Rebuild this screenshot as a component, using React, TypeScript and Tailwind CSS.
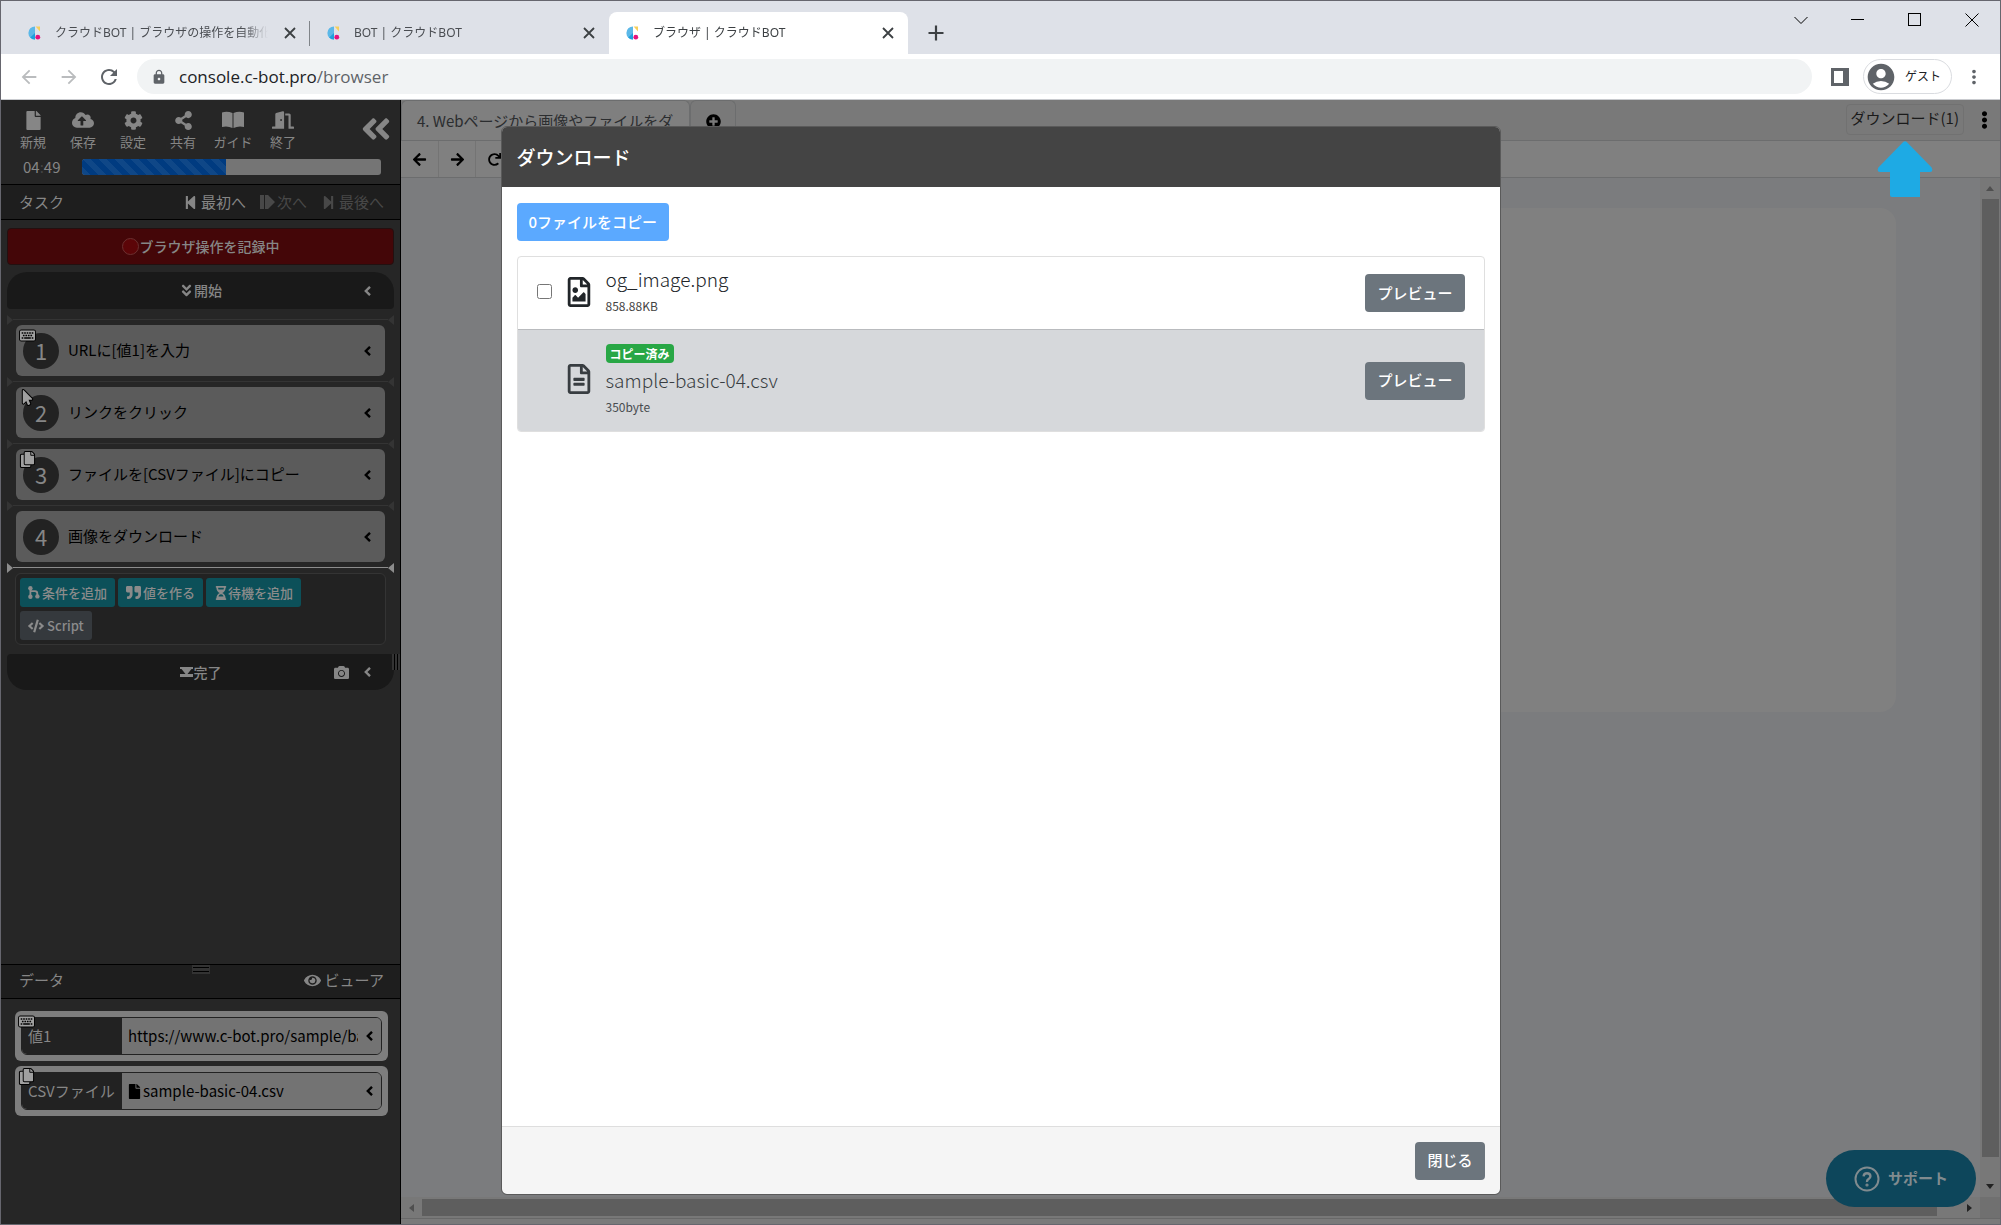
import { useState } from 'react';
import type { ReactNode } from 'react';
import {
  FaAngleDoubleDown,
  FaAngleDoubleLeft,
  FaArrowLeft,
  FaArrowRight,
  FaCamera,
  FaCloudUploadAlt,
  FaCode,
  FaCog,
  FaCopy,
  FaDoorOpen,
  FaEllipsisV,
  FaEye,
  FaFile,
  FaHourglassHalf,
  FaKeyboard,
  FaMousePointer,
  FaPlusCircle,
  FaQuoteRight,
  FaRedo,
  FaRegFileAlt,
  FaRegFileImage,
  FaShareAlt,
  FaStepBackward,
  FaStepForward,
} from 'react-icons/fa';
import { MdAccountCircle, MdArrowBack, MdArrowForward, MdLock, MdMoreVert, MdRefresh } from 'react-icons/md';

const menuItems = [
  { label: '新規', icon: <FaFile /> },
  { label: '保存', icon: <FaCloudUploadAlt className="text-[22px]" /> },
  { label: '設定', icon: <FaCog /> },
  { label: '共有', icon: <FaShareAlt /> },
  { label: 'ガイド', icon: <BookIcon /> },
  { label: '終了', icon: <FaDoorOpen className="text-[22px]" /> },
];

const tasks = [
  { text: 'URLに[値1]を入力', badge: <FaKeyboard /> },
  { text: 'リンクをクリック', badge: <FaMousePointer /> },
  { text: 'ファイルを[CSVファイル]にコピー', badge: <FaCopy /> },
  { text: '画像をダウンロード', badge: null },
];

function BookIcon() {
  return (
    <svg viewBox="0 0 22 18" className="h-[18px] w-[22px]" fill="currentColor">
      <path d="M0 1.4Q5.5 0 10.5 2V17Q5.5 14.6 0 16ZM22 1.4Q16.500 0 11.500 2V17Q16.500 14.600 22 16Z" />
    </svg>
  );
}

function Chevron() {
  return (
    <svg viewBox="0 0 7 10" className="h-2.5 w-[7px] shrink-0" fill="none" stroke="currentColor" strokeWidth="2.4">
      <path d="M6 0.800L1.800 5L6 9.200" />
    </svg>
  );
}

function BranchIcon() {
  return (
    <svg viewBox="0 0 12 13" className="mr-0.5 h-[13px] w-3" fill="currentColor">
      <circle cx="2.400" cy="2.200" r="2.200" />
      <circle cx="2.400" cy="10.800" r="2.200" />
      <circle cx="9.400" cy="10.400" r="2.200" />
      <path d="M1.500 2H3.300V11H1.500ZM3 4.200H7Q10.200 4.200 10.200 7.400V10H8.400V7.600Q8.400 6 6.800 6H3Z" />
    </svg>
  );
}

function Favicon() {
  return (
    <svg viewBox="0 0 14 14" className="size-3.5 shrink-0">
      <path d="M8 0.4A6.6 6.6 0 1 0 8 13.6Z" fill="#5bb8e8" />
      <path d="M8 7L3.2 11.6A6.6 6.6 0 0 0 8 13.6Z" fill="#1e9fdc" />
      <path d="M8.6 0.4H13V5.4Z" fill="#f7cf5a" />
      <circle cx="10.8" cy="11.2" r="2.4" fill="#e4127d" />
    </svg>
  );
}

function CloseIcon() {
  return (
    <svg viewBox="0 0 16 16" className="size-4" stroke="currentColor" strokeWidth="1.8">
      <path d="M3 3L13 13M13 3L3 13" />
    </svg>
  );
}

function BrowserTab({ title, active }: { title: string; active?: boolean }) {
  return (
    <div
      className={`relative flex h-[42px] w-[299px] items-center gap-3.5 pr-3 pl-4 text-[12px] ${
        active ? 'rounded-t-lg bg-white text-[#3c4043]' : 'text-[#4a4d52]'
      }`}
    >
      <Favicon />
      <span className="min-w-0 flex-1 overflow-hidden [mask-image:linear-gradient(to_right,black_88%,transparent)] whitespace-nowrap">
        {title}
      </span>
      <button type="button" aria-label="閉じる" className="text-[#3c4043]">
        <CloseIcon />
      </button>
    </div>
  );
}

function BrowserChrome() {
  return (
    <header className="shrink-0 font-['Noto_Sans','Noto_Sans_CJK_JP',sans-serif]">
      <div className="flex h-[53px] justify-between bg-[#dee1e8]">
        <div className="flex items-end pl-2.5">
          <BrowserTab title="クラウドBOT | ブラウザの操作を自動化" />
          <span className="mb-2 -ml-px h-[25px] w-px bg-[#808489]" />
          <BrowserTab title="BOT | クラウドBOT" />
          <BrowserTab title="ブラウザ | クラウドBOT" active />
          <button type="button" aria-label="新しいタブ" className="flex h-[42px] w-14 items-center justify-center text-[#3c4043]">
            <svg viewBox="0 0 16 16" className="size-4" stroke="currentColor" strokeWidth="2.2">
              <path d="M8 0.5V15.5M0.5 8H15.5" />
            </svg>
          </button>
        </div>
        <div className="flex h-[37px] text-black">
          <button type="button" aria-label="タブを検索" className="flex w-[57px] items-center justify-center">
            <svg viewBox="0 0 14 14" className="size-3.5" fill="none" stroke="currentColor">
              <path d="M0.5 4L7 10.5L13.5 4" />
            </svg>
          </button>
          <button type="button" aria-label="最小化" className="flex w-[57px] items-center justify-center">
            <span className="h-px w-[13px] bg-black" />
          </button>
          <button type="button" aria-label="最大化" className="flex w-[57px] items-center justify-center">
            <span className="size-[13px] border border-black" />
          </button>
          <button type="button" aria-label="閉じる" className="flex w-[57px] items-center justify-center">
            <svg viewBox="0 0 14 14" className="size-3.5" stroke="currentColor">
              <path d="M0.5 0.5L13.5 13.5M13.5 0.5L0.5 13.5" />
            </svg>
          </button>
        </div>
      </div>
      <div className="flex h-[46px] items-center border-b border-[#c9cbcf] bg-white pr-3 pl-2 text-[#5f6368]">
        <button type="button" aria-label="戻る" className="flex w-10 justify-center text-[#babcbe]">
          <MdArrowBack size={22} />
        </button>
        <button type="button" aria-label="進む" className="flex w-10 justify-center text-[#babcbe]">
          <MdArrowForward size={22} />
        </button>
        <button type="button" aria-label="再読み込み" className="flex w-10 justify-center">
          <MdRefresh size={24} />
        </button>
        <div className="ml-2 flex h-[35px] flex-1 items-center gap-3 rounded-full bg-[#f1f3f4] px-3.5">
          <MdLock size={16} />
          <span className="font-['Open_Sans',sans-serif] text-[17px]">
            <span className="text-[#202124]">console.c-bot.pro</span>/browser
          </span>
        </div>
        <button type="button" aria-label="サイドパネル" className="ml-[19px] h-[18px] w-[18px] border-[3px] border-r-[6px] border-[#5f6368]" />
        <button type="button" className="ml-3.5 flex h-[35px] items-center gap-2 rounded-full border border-[#dadce0] pr-2.5 pl-px text-[12px] text-[#202124]">
          <MdAccountCircle size={32} className="text-[#5f6368]" />
          ゲスト
        </button>
        <button type="button" aria-label="メニュー" className="ml-2 flex w-7 justify-center">
          <MdMoreVert size={22} />
        </button>
      </div>
    </header>
  );
}

function DropLine({ active }: { active?: boolean }) {
  return (
    <div className={`flex h-[11px] items-center px-1.5 ${active ? 'text-[#8c8c8c]' : 'text-[#343434]'}`}>
      <svg viewBox="0 0 6 10" className="h-2.5 w-1.5" fill="currentColor">
        <path d="M0 0L6 5L0 10Z" />
      </svg>
      <span className="h-px flex-1 bg-current" />
      <svg viewBox="0 0 6 10" className="h-2.5 w-1.5" fill="currentColor">
        <path d="M6 0L0 5L6 10Z" />
      </svg>
    </div>
  );
}

function CornerBadge({ children }: { children: ReactNode }) {
  return (
    <span className="absolute top-[3px] left-1 text-[15px] text-[#a0a0a0] [&_path]:[paint-order:stroke] [&_path]:stroke-black [&_path]:stroke-[70px] [&_svg]:overflow-visible">
      {children}
    </span>
  );
}

function ActionButton({ icon, label, dark }: { icon: ReactNode; label: string; dark?: boolean }) {
  return (
    <button
      type="button"
      className={`flex h-[29px] items-center rounded-[3px] px-2 text-[13px] font-medium text-[#8b8b8b] ${
        dark ? 'bg-[#35393d]' : 'bg-[#0c5059]'
      }`}
    >
      {icon}
      {label}
    </button>
  );
}

function DataRow({
  id,
  label,
  value,
  badge,
  file,
}: {
  id: string;
  label: string;
  value: string;
  badge: ReactNode;
  file?: boolean;
}) {
  return (
    <div className="relative rounded-md bg-[#7e7e7e] p-1.5">
      <div className="flex h-[38px] overflow-hidden rounded-md border border-[#222] text-[15px]">
        <label htmlFor={id} className="flex w-[100px] shrink-0 items-center bg-[#222] pl-1.5 whitespace-nowrap text-[#868686]">
          {label}
        </label>
        <div className="flex min-w-0 flex-1 items-center bg-[#737373] pl-1.5 text-black">
          {file && <FaFile size={15} className="-ml-px mr-px shrink-0" />}
          <input id={id} defaultValue={value} className="min-w-0 flex-1 bg-transparent outline-none" />
          <span className="pr-2 pl-2">
            <Chevron />
          </span>
        </div>
      </div>
      <CornerBadge>{badge}</CornerBadge>
    </div>
  );
}

function Sidebar() {
  return (
    <aside className="flex w-[400px] shrink-0 flex-col border-r border-black bg-[#262626] text-[#868686]">
      <div className="h-[84px] shrink-0 px-[7px]">
        <div className="flex items-start justify-between pt-2.5">
          <div className="flex">
            {menuItems.map((item) => (
              <button key={item.label} type="button" className="flex w-[50px] flex-col items-center text-[19px]">
                <span className="flex h-5 items-center">{item.icon}</span>
                <span className="mt-0.5 text-[13px] leading-5 whitespace-nowrap">{item.label}</span>
              </button>
            ))}
          </div>
          <button type="button" aria-label="たたむ" className="pt-0.5">
            <FaAngleDoubleLeft size={34} />
          </button>
        </div>
        <div className="mt-[5px] flex h-5 items-center pr-3 pl-[15px]">
          <span className="w-[59px] text-[15px]">
            04<span className="text-[#444]">:</span>49
          </span>
          <div className="h-4 flex-1 overflow-hidden rounded-[3px] bg-[#757575]">
            <div className="h-full w-[48%] bg-[#003b80] bg-[linear-gradient(45deg,rgba(255,255,255,0.06)_25%,transparent_25%,transparent_50%,rgba(255,255,255,0.06)_50%,rgba(255,255,255,0.06)_75%,transparent_75%,transparent)] bg-[length:16px_16px]" />
          </div>
        </div>
      </div>

      <div className="flex h-9 shrink-0 items-center border-y border-black bg-[#1e1e1e] pr-4 pl-[18px] text-[15px]">
        <h2 className="flex-1">タスク</h2>
        <button type="button" className="flex items-center gap-[3px]">
          <FaStepBackward size={15} />
          最初へ
        </button>
        <button type="button" disabled className="ml-3.5 flex items-center gap-0.5 text-[#484848]">
          <svg viewBox="0 0 15 14" className="h-3.5 w-[15px]" fill="currentColor">
            <path d="M0 0H4V14H0ZM5 0H8L15 7L8 14H5Z" />
          </svg>
          次へ
        </button>
        <button type="button" disabled className="ml-3.5 flex items-center gap-[3px] text-[#484848]">
          <FaStepForward size={15} />
          最後へ
        </button>
      </div>

      <div className="relative min-h-0 flex-1 px-1.5 pt-2">
        <button
          type="button"
          className="flex h-[37px] w-full items-center justify-center rounded border border-[#231010] bg-[#440608] text-[14px] font-medium"
        >
          <span className="mr-px size-[17px] rounded-full border border-[#6b3030] bg-[#5c0508]" />
          ブラウザ操作を記録中
        </button>
        <button
          type="button"
          className="relative mt-[7px] mb-[5px] flex h-[37px] w-full items-center justify-center rounded-t-[20px] rounded-b bg-[#191919] text-[14px] font-medium"
        >
          <FaAngleDoubleDown size={15} />
          開始
          <span className="absolute right-[23px]">
            <Chevron />
          </span>
        </button>
        {tasks.map((task, i) => (
          <div key={task.text} className="-mx-1.5">
            <DropLine />
            <div className="relative mx-[15px] flex h-[51px] items-center rounded-md bg-[#5b5b5b] pr-3.5 pl-[7px] text-[15px] text-black">
              <span className="flex size-9 items-center justify-center rounded-full bg-[#222] text-[22px] text-[#868686]">
                {i + 1}
              </span>
              <span className="ml-[9px] flex-1">{task.text}</span>
              <Chevron />
              <CornerBadge>{task.badge}</CornerBadge>
            </div>
          </div>
        ))}
        <div className="-mx-1.5">
          <DropLine active />
        </div>
        <div className="mx-2 rounded-md border border-[#343434] bg-[#222] p-1">
          <div className="flex gap-[3px]">
            <ActionButton icon={<BranchIcon />} label="条件を追加" />
            <ActionButton icon={<FaQuoteRight size={15} className="mr-0.5" />} label="値を作る" />
            <ActionButton icon={<FaHourglassHalf size={14} />} label="待機を追加" />
          </div>
          <div className="mt-1 flex">
            <ActionButton icon={<FaCode size={16} className="mr-[3px]" />} label="Script" dark />
          </div>
        </div>
        <button
          type="button"
          className="relative mt-[9px] flex h-9 w-full items-center justify-center gap-px rounded-t rounded-b-[20px] bg-[#191919] text-[14px] font-medium"
        >
          <svg viewBox="0 0 13 10" className="h-2.5 w-[13px]" fill="currentColor">
            <path d="M0 0H13V2H11.5L7.500 7H13V10H0V7H5.500L1.5 2H0Z" />
          </svg>
          完了
          <span className="absolute right-[23px] flex items-center gap-[15px]">
            <FaCamera size={15} />
            <Chevron />
          </span>
        </button>
        <span className="absolute top-[434px] right-0 flex h-4 w-2 justify-center gap-0.5 bg-[#333]">
          <i className="w-px bg-black" />
          <i className="w-px bg-black" />
        </span>
      </div>

      <div className="relative flex h-[35px] shrink-0 items-center justify-between border-y border-black bg-[#1e1e1e] pr-4 pb-0.5 pl-[18px] text-[15px]">
        <h2>データ</h2>
        <button type="button" className="flex items-center gap-1">
          <FaEye size={17} />
          ビューア
        </button>
        <span className="absolute top-0 left-1/2 flex h-[9px] w-[18px] -translate-x-1/2 flex-col justify-center gap-[3px] bg-[#333] px-px">
          <i className="h-px bg-black" />
          <i className="h-px bg-black" />
        </span>
      </div>
      <div className="flex h-[225px] shrink-0 flex-col gap-[5px] pt-3 pr-3 pl-3.5">
        <DataRow id="value1" label="値1" value="https://www.c-bot.pro/sample/basic" badge={<FaKeyboard />} />
        <DataRow id="csv" label="CSVファイル" value="sample-basic-04.csv" badge={<FaCopy />} file />
      </div>
    </aside>
  );
}

function RemoteBrowser() {
  return (
    <main className="flex min-w-0 flex-1 flex-col bg-[#808080] text-[#1a1a1a]">
      <div className="flex h-10 shrink-0 bg-[#797979] text-[15px]">
        <div className="flex w-[289px] items-center overflow-hidden rounded-t-md border border-b-0 border-[#6c6d6e] bg-[#7f7f7f] px-[15px] pt-0.5 whitespace-nowrap text-[#2b2d2f]">
          4. Webページから画像やファイルをダ
        </div>
        <button
          type="button"
          aria-label="タブを追加"
          className="flex w-[46px] items-center justify-center rounded-t-md border border-b-0 border-[#6c6d6e] pt-0.5 text-black"
        >
          <FaPlusCircle size={15} />
        </button>
        <div className="relative mt-1 ml-auto">
          <button type="button" className="h-[31px] rounded border border-[#717171] px-1 pb-0.5 whitespace-nowrap">
            ダウンロード(1)
          </button>
          <svg viewBox="0 0 56 56" className="absolute top-[37px] left-[31px] z-20 size-14" fill="#1eaae4">
            <path d="M26 1.2Q28 -0.6 30 1.2L54.6 26.4Q56.6 30.6 53 31H43V56H15Q13 56 13 54V31H3Q-0.6 30.6 1.4 26.4Z" />
          </svg>
        </div>
        <button type="button" aria-label="メニュー" className="ml-3 flex w-[17px] items-center justify-center text-black">
          <FaEllipsisV size={18} />
        </button>
        <span className="w-[7px]" />
      </div>
      <div className="flex h-[38px] shrink-0 border-y border-[#6c6d6e] text-black">
        <button type="button" aria-label="戻る" className="flex w-[38px] items-center justify-center border-r border-[#747474]">
          <FaArrowLeft size={15} />
        </button>
        <button type="button" aria-label="進む" className="flex w-[37px] items-center justify-center border-r border-[#747474]">
          <FaArrowRight size={15} />
        </button>
        <button type="button" aria-label="再読み込み" className="flex w-[37px] items-center justify-center">
          <FaRedo size={13} />
        </button>
      </div>
      <div className="grid min-h-0 flex-1 grid-cols-[1fr_20px] grid-rows-[1fr_21px]">
        <div className="bg-[#7b7c7e] pt-[30px] pr-[84px]">
          <div className="h-[504px] rounded-r-2xl bg-[linear-gradient(to_right,#7b7c7e_120px,#808080_120px)]" />
        </div>
        <div className="flex flex-col items-center bg-[#787878]">
          <svg viewBox="0 0 8 5" className="my-2 h-[5px] w-2 shrink-0" fill="#4f4f4f">
            <path d="M4 0L8 5H0Z" />
          </svg>
          <div className="w-[17px] flex-1 bg-[#5e5e5e]" />
          <svg viewBox="0 0 8 5" className="mt-[27px] mb-2 h-[5px] w-2 shrink-0" fill="#222">
            <path d="M0 0H8L4 5Z" />
          </svg>
        </div>
        <div className="flex items-center bg-[#787878]">
          <svg viewBox="0 0 5 8" className="mx-2 h-2 w-[5px] shrink-0" fill="#4f4f4f">
            <path d="M5 0V8L0 4Z" />
          </svg>
          <div className="h-[17px] flex-1 bg-[#5e5e5e]" />
          <svg viewBox="0 0 5 8" className="mr-2 ml-[30px] h-2 w-[5px] shrink-0" fill="#222">
            <path d="M0 0L5 4L0 8Z" />
          </svg>
        </div>
        <div className="bg-[#707070]" />
      </div>
      <div className="h-1.5 shrink-0 border-t border-[#686868] bg-[#7a7a7a]" />
    </main>
  );
}

function PreviewButton() {
  return (
    <button type="button" className="h-[38px] rounded bg-[#6c757d] px-3 text-[15px] font-medium text-white">
      プレビュー
    </button>
  );
}

function DownloadDialog() {
  const [checked, setChecked] = useState(false);

  return (
    <div className="absolute inset-0 z-10 flex justify-center pt-[27px] pb-[30px]">
      <section
        role="dialog"
        aria-label="ダウンロード"
        className="flex w-[998px] flex-col overflow-hidden rounded-[5px] bg-white text-[#212529] outline outline-[#5a5a5a]"
      >
        <h1 className="flex h-[60px] shrink-0 items-center bg-[#444] px-[15px] text-[19px] font-medium text-white">
          ダウンロード
        </h1>
        <div className="flex-1 px-[15px] pt-4">
          <button type="button" className="h-[38px] rounded bg-[#5ba9ff] px-3 text-[15px] font-medium text-white">
            {checked ? 1 : 0}ファイルをコピー
          </button>
          <ul className="mt-[15px] overflow-hidden rounded border border-[#dfdfdf]">
            <li className="flex h-[72px] items-center px-[19px]">
              <input
                id="og-image"
                type="checkbox"
                checked={checked}
                onChange={(e) => setChecked(e.target.checked)}
                className="mb-1 size-[15px]"
              />
              <FaRegFileImage size={30} className="mb-0.5 ml-3" />
              <label htmlFor="og-image" className="mb-1 ml-3 flex-1">
                <span className="block text-[19px] leading-[30px] font-light">og_image.png</span>
                <span className="block text-[12px] leading-6 text-[#444]">858.88KB</span>
              </label>
              <PreviewButton />
            </li>
            <li className="flex h-[102px] items-center border-t border-[#b9bbbe] bg-[#d6d8db] px-[19px] text-[#383d41]">
              <FaRegFileAlt size={30} className="mb-1 ml-[27px]" />
              <div className="ml-3 flex-1">
                <span className="flex w-fit rounded bg-[#28a745] px-1 text-[12px] leading-[19px] font-bold text-white">
                  コピー済み
                </span>
                <span className="block text-[19px] leading-[34px] font-light">sample-basic-04.csv</span>
                <span className="block text-[12px] leading-5 text-[#484c50]">350byte</span>
              </div>
              <PreviewButton />
            </li>
          </ul>
        </div>
        <footer className="flex h-[68px] shrink-0 items-center justify-end border-t border-[#dedede] bg-[#f5f5f5] px-[15px]">
          <button type="button" className="h-[38px] rounded bg-[#6c757d] px-3 text-[15px] font-medium text-white">
            閉じる
          </button>
        </footer>
      </section>
    </div>
  );
}

export default function App() {
  return (
    <div className="flex h-screen flex-col overflow-hidden border border-[#66666e] bg-[#262626] font-['Noto_Sans_CJK_JP',sans-serif]">
      <BrowserChrome />
      <div className="relative flex min-h-0 flex-1">
        <Sidebar />
        <RemoteBrowser />
        <DownloadDialog />
        <button
          type="button"
          className="absolute right-6 bottom-[17px] z-20 flex h-[57px] w-[150px] items-center justify-center gap-2 rounded-full bg-[#0d465b] text-[15px] font-bold text-[#808b8f]"
        >
          <svg viewBox="0 0 26 26" className="size-[26px]" fill="none" stroke="currentColor" strokeWidth="2">
            <circle cx="13" cy="13" r="11.5" />
            <path d="M9.6 10.4Q9.8 7.2 13 7.2T16.4 10.2Q16.4 11.8 14.6 13T13 16" strokeWidth="2.4" />
            <circle cx="13" cy="19" r="0.6" />
          </svg>
          サポート
        </button>
      </div>
    </div>
  );
}
